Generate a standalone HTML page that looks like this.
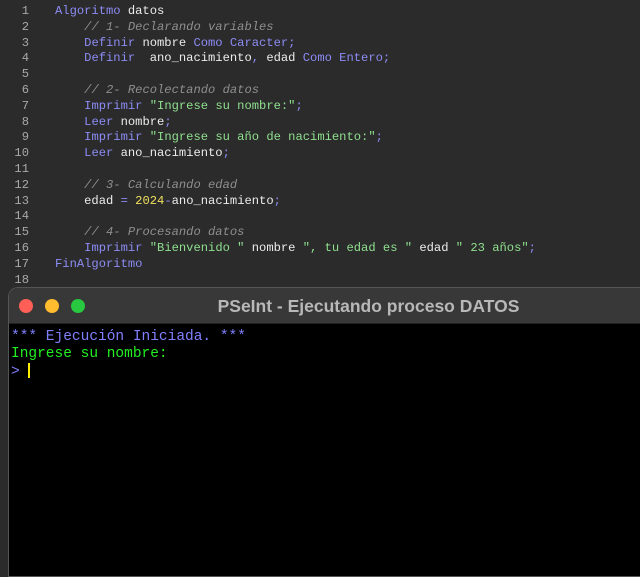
<!DOCTYPE html>
<html><head><meta charset="utf-8"><style>
*{margin:0;padding:0;box-sizing:border-box}
body{width:640px;height:563px;background:#2b2b2b;overflow:hidden;position:relative;font-family:"Liberation Mono",monospace}
.ed{position:absolute;left:0;top:4px;width:640px}
.l{height:15.8px;line-height:15.8px;font-size:12.15px;white-space:pre;color:#ececec;position:relative}
.n{position:absolute;right:611px;color:#a8a8a8;text-align:right}
.c{position:absolute;left:55px}
.k{color:#8c8cf5}.s{color:#8fe08f}.m{color:#8f8f8f;font-style:italic}.y{color:#f0e060}
.win{position:absolute;left:8px;top:287px;width:640px;height:290px;background:#000;border-radius:10px 0 0 0;border:1px solid #555;border-right:none;overflow:hidden}
.tb{height:36px;background:#383838;border-bottom:1px solid #222;position:relative}
.d{position:absolute;top:11px;width:14px;height:14px;border-radius:50%}
.t{position:absolute;left:0;right:0;top:0;text-align:center;line-height:36px;font-family:"Liberation Sans",sans-serif;font-weight:bold;font-size:17.5px;color:#b8b8b8;padding-left:80px}
.tl{font-size:14.5px;line-height:17px;white-space:pre;padding-left:2px}
</style></head><body>
<div class="ed">
<div class="l"><span class="n">1</span><span class="c"><span class="k">Algoritmo</span> datos</span></div>
<div class="l"><span class="n">2</span><span class="c">    <span class="m">// 1- Declarando variables</span></span></div>
<div class="l"><span class="n">3</span><span class="c">    <span class="k">Definir</span> nombre <span class="k">Como Caracter;</span></span></div>
<div class="l"><span class="n">4</span><span class="c">    <span class="k">Definir</span>  ano_nacimiento<span class="k">,</span> edad <span class="k">Como Entero;</span></span></div>
<div class="l"><span class="n">5</span></div>
<div class="l"><span class="n">6</span><span class="c">    <span class="m">// 2- Recolectando datos</span></span></div>
<div class="l"><span class="n">7</span><span class="c">    <span class="k">Imprimir</span> <span class="s">"Ingrese su nombre:"</span><span class="k">;</span></span></div>
<div class="l"><span class="n">8</span><span class="c">    <span class="k">Leer</span> nombre<span class="k">;</span></span></div>
<div class="l"><span class="n">9</span><span class="c">    <span class="k">Imprimir</span> <span class="s">"Ingrese su año de nacimiento:"</span><span class="k">;</span></span></div>
<div class="l"><span class="n">10</span><span class="c">    <span class="k">Leer</span> ano_nacimiento<span class="k">;</span></span></div>
<div class="l"><span class="n">11</span></div>
<div class="l"><span class="n">12</span><span class="c">    <span class="m">// 3- Calculando edad</span></span></div>
<div class="l"><span class="n">13</span><span class="c">    edad <span class="k">=</span> <span class="y">2024</span><span class="k">-</span>ano_nacimiento<span class="k">;</span></span></div>
<div class="l"><span class="n">14</span></div>
<div class="l"><span class="n">15</span><span class="c">    <span class="m">// 4- Procesando datos</span></span></div>
<div class="l"><span class="n">16</span><span class="c">    <span class="k">Imprimir</span> <span class="s">"Bienvenido "</span> nombre <span class="s">", tu edad es "</span> edad <span class="s">" 23 años"</span><span class="k">;</span></span></div>
<div class="l"><span class="n">17</span><span class="c"><span class="k">FinAlgoritmo</span></span></div>
<div class="l"><span class="n">18</span></div>
</div>
<div class="win">
<div class="tb">
<div class="d" style="left:10px;background:#fe5f57"></div>
<div class="d" style="left:36px;background:#febc2e"></div>
<div class="d" style="left:62px;background:#28c840"></div>
<div class="t">PSeInt - Ejecutando proceso DATOS</div>
</div>
<div style="padding-top:5px">
<div class="tl" style="color:#8080ff">*** Ejecución Iniciada. ***</div>
<div class="tl" style="color:#22ee22">Ingrese su nombre:</div>
<div class="tl" style="color:#8080ff">&gt; <span style="display:inline-block;width:2px;height:15px;background:#ffee00;vertical-align:-3px"></span></div>
</div>
</div>
</body></html>
